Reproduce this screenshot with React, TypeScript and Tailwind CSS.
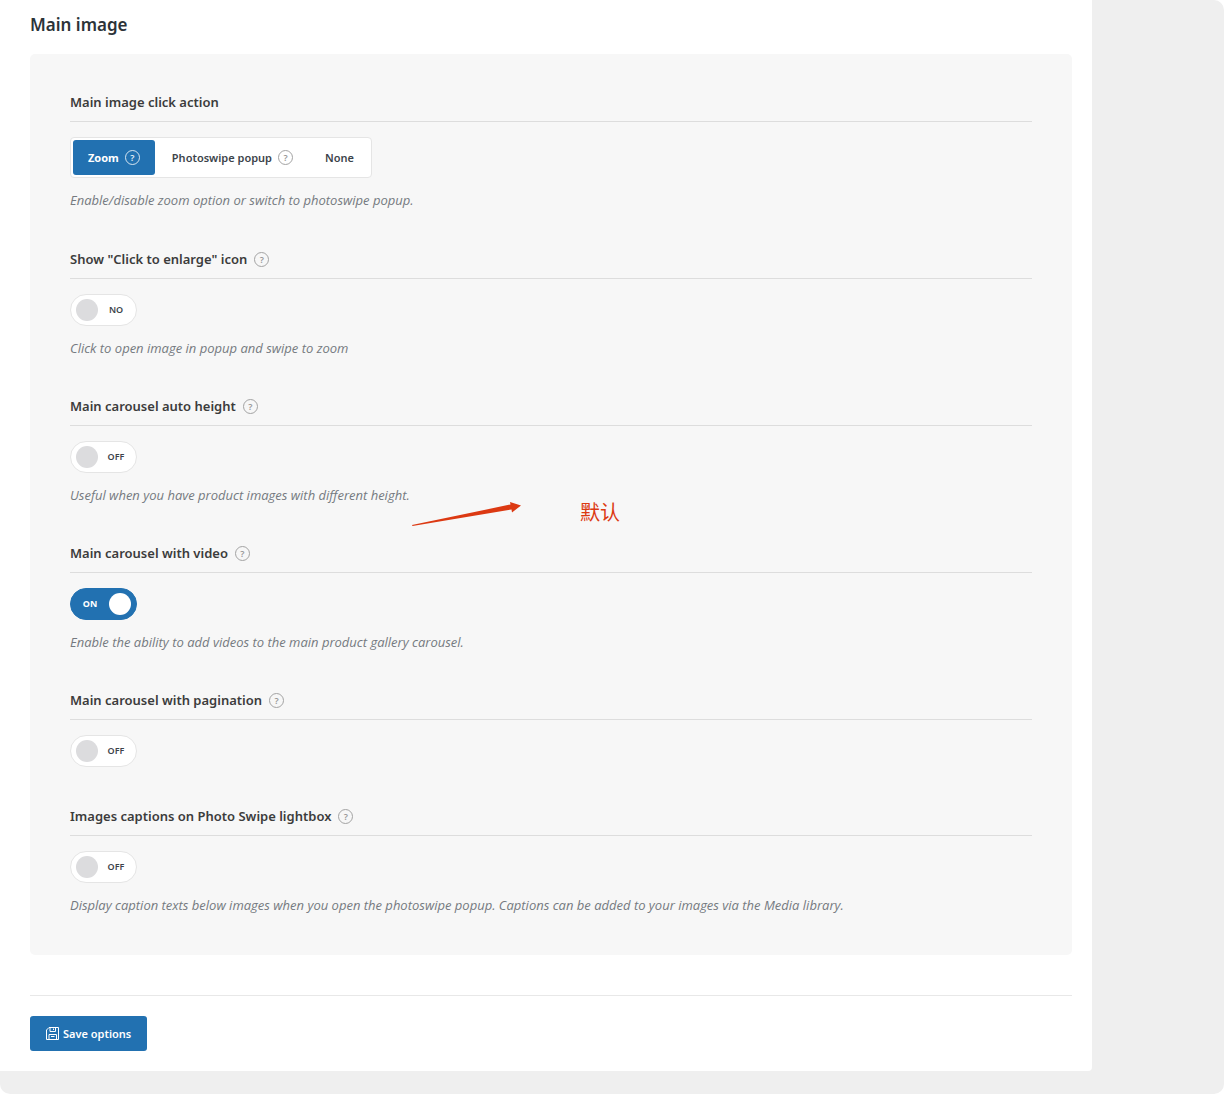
import React, { useState } from 'react';

interface ToggleOption {
  id: string;
  title: string;
  onText: string;
  offText: string;
  defaultOn: boolean;
  description?: string;
}

const clickActions = [
  { value: 'zoom', label: 'Zoom', hasHelp: true },
  { value: 'popup', label: 'Photoswipe popup', hasHelp: true },
  { value: 'none', label: 'None', hasHelp: false },
];

const toggleOptions: ToggleOption[] = [
  {
    id: 'enlarge-icon',
    title: 'Show "Click to enlarge" icon',
    onText: 'YES',
    offText: 'NO',
    defaultOn: false,
    description: 'Click to open image in popup and swipe to zoom',
  },
  {
    id: 'auto-height',
    title: 'Main carousel auto height',
    onText: 'ON',
    offText: 'OFF',
    defaultOn: false,
    description: 'Useful when you have product images with different height.',
  },
  {
    id: 'with-video',
    title: 'Main carousel with video',
    onText: 'ON',
    offText: 'OFF',
    defaultOn: true,
    description: 'Enable the ability to add videos to the main product gallery carousel.',
  },
  {
    id: 'with-pagination',
    title: 'Main carousel with pagination',
    onText: 'ON',
    offText: 'OFF',
    defaultOn: false,
  },
  {
    id: 'captions',
    title: 'Images captions on Photo Swipe lightbox',
    onText: 'ON',
    offText: 'OFF',
    defaultOn: false,
    description: 'Display caption texts below images when you open the photoswipe popup. Captions can be added to your images via the Media library.',
  },
];

function HelpMark({ light = false }: { light?: boolean }) {
  return (
    <span
      className={`flex h-[15px] w-[15px] shrink-0 items-center justify-center rounded-full border text-[9px] leading-none font-semibold ${
        light ? 'border-white/80 text-white/90' : 'border-[#a3a3a3] text-[#969696]'
      }`}
    >
      ?
    </span>
  );
}

function Description({ children }: { children: React.ReactNode }) {
  return (
    <p className="mt-[13px] font-['Open_Sans','Noto_Sans',sans-serif] text-[13px] leading-[18px] text-[#757a80] italic">
      {children}
    </p>
  );
}

function ToggleRow({ option }: { option: ToggleOption }) {
  const [on, setOn] = useState(option.defaultOn);

  return (
    <section>
      <div className="flex items-center gap-[7px] border-b border-[#dddddd] pb-[9px]">
        <label htmlFor={option.id} className="text-[13px] leading-5 font-semibold text-[#3c3c3c]">
          {option.title}
        </label>
        <button type="button" aria-label="Help" className="cursor-pointer">
          <HelpMark />
        </button>
      </div>

      <label
        className={`mt-[15px] flex h-8 w-[67px] cursor-pointer items-center rounded-full border text-[9px] ${
          on
            ? 'border-[#2271b1] bg-[#2271b1] pr-[5px] font-bold text-white'
            : 'flex-row-reverse border-[#e5e5e5] bg-white pr-0.5 pl-[5px] font-semibold text-[#3c434a]'
        }`}
      >
        <input
          id={option.id}
          type="checkbox"
          checked={on}
          onChange={(e) => setOn(e.target.checked)}
          className="sr-only"
        />
        <span className="flex-1 text-center">{on ? option.onText : option.offText}</span>
        <span className={`h-[22px] w-[22px] rounded-full ${on ? 'bg-white' : 'bg-[#dcdcde]'}`}></span>
      </label>

      {option.description && <Description>{option.description}</Description>}
    </section>
  );
}

function SaveIcon() {
  return (
    <svg width="13" height="13" viewBox="0 0 13 13" fill="none" stroke="currentColor" strokeWidth="1" aria-hidden="true">
      <path d="M3 .5h9.500v12H.5V3z" />
      <path d="M4 .5v4h5.500v-4" />
      <path d="M7.500 1.500v1.500" />
      <path d="M3 12.500v-5h7.500v5M5 9.500h3.500" />
    </svg>
  );
}

export default function App() {
  const [clickAction, setClickAction] = useState('zoom');

  return (
    <div className="min-h-screen rounded-r-[10px] rounded-bl-[10px] bg-[#efefef] pr-[132px] pb-[23px] font-['Noto_Sans','Open_Sans',sans-serif]">
      <main className="rounded-br-[4px] bg-white pt-[13px] pr-5 pb-5 pl-[30px]">
        <h1 className="text-[17px] leading-6 font-semibold text-[#2c3338]">Main image</h1>

        {/* Options card */}
        <div className="relative mt-[17px] flex flex-col gap-[39px] rounded-[5px] bg-[#f7f7f7] px-10 pt-[38px] pb-[41px]">
          <section className="pb-px">
            <h2 className="border-b border-[#dddddd] pb-[9px] text-[13px] leading-5 font-semibold text-[#3c3c3c]">
              Main image click action
            </h2>
            <div
              role="radiogroup"
              aria-label="Main image click action"
              className="mt-[15px] flex w-fit gap-0.5 rounded-[4px] border border-[#e5e5e5] bg-white p-0.5"
            >
              {clickActions.map((action) => (
                <label
                  key={action.value}
                  className={`flex h-[35px] cursor-pointer items-center gap-1.5 rounded-[3px] px-[15px] text-[11px] ${
                    clickAction === action.value ? 'bg-[#2271b1] font-bold text-white' : 'font-semibold text-[#3c434a]'
                  }`}
                >
                  <input
                    type="radio"
                    name="click-action"
                    value={action.value}
                    checked={clickAction === action.value}
                    onChange={() => setClickAction(action.value)}
                    className="sr-only"
                  />
                  <span className="pt-0.5">{action.label}</span>
                  {action.hasHelp && <HelpMark light={clickAction === action.value} />}
                </label>
              ))}
            </div>
            <Description>Enable/disable zoom option or switch to photoswipe popup.</Description>
          </section>

          {toggleOptions.map((option) => (
            <ToggleRow key={option.id} option={option} />
          ))}

          {/* Annotation drawn over the card */}
          <div className="pointer-events-none absolute top-[446px] left-[381px] flex items-start gap-[58px] text-[#dc3912]">
            <svg width="111" height="28" viewBox="0 0 111 28" fill="currentColor" aria-hidden="true">
              <path d="M1 25 99.500 4.500 99 2 110 5.500 101 12.500 100.500 9.500 1.500 26z" />
            </svg>
            <span className="text-[20px] leading-6 font-normal font-['Noto_Sans_CJK_SC',sans-serif]">默认</span>
          </div>
        </div>

        <div className="mt-10 border-t border-[#e8e8e8] pt-5">
          <button
            type="button"
            className="flex h-[35px] cursor-pointer items-center gap-1 rounded-[3px] bg-[#2271b1] px-4 text-[11px] font-semibold text-white"
          >
            <SaveIcon />
            <span className="pt-0.5">Save options</span>
          </button>
        </div>
      </main>
    </div>
  );
}
